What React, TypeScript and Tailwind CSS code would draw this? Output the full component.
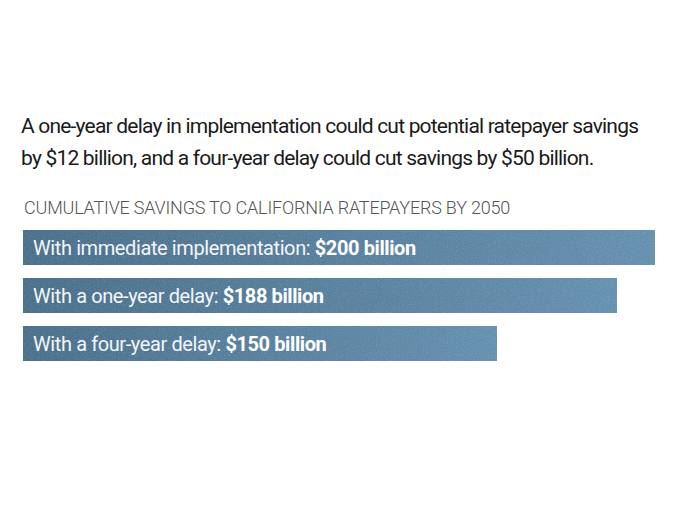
import React from "react";

const bars = [
  { label: "With immediate implementation:", value: "$200 billion", amount: 200 },
  { label: "With a one-year delay:", value: "$188 billion", amount: 188 },
  { label: "With a four-year delay:", value: "$150 billion", amount: 150 },
];

const FULL_WIDTH = 632;

/** Grainy texture laid over each bar */
function Grain({ id }: { id: string }) {
  return (
    <svg className="pointer-events-none absolute inset-0 h-full w-full opacity-30" aria-hidden>
      <filter id={id}>
        <feTurbulence type="fractalNoise" baseFrequency="0.9" numOctaves="2" stitchTiles="stitch" />
        <feColorMatrix type="saturate" values="0" />
      </filter>
      <rect width="100%" height="100%" filter={`url(#${id})`} />
    </svg>
  );
}

function Bar({ label, value, amount, index }: { label: string; value: string; amount: number; index: number }) {
  return (
    <div
      className="relative flex h-[35px] items-center overflow-hidden bg-gradient-to-r from-[#3c6686] to-[#5b8cb0] pl-[10px]"
      style={{ width: (FULL_WIDTH * amount) / 200 }}
    >
      <Grain id={`grain-${index}`} />
      <span className="relative whitespace-nowrap text-[20px] tracking-[-0.4px] text-[#f2f6f9]">
        {label} <b className="font-bold text-white">{value}</b>
      </span>
    </div>
  );
}

export default function App() {
  return (
    <div className="h-[510px] w-[680px] bg-white pl-[21px] pt-[110px] font-['Roboto',sans-serif]">
      <p className="whitespace-nowrap text-[21px] leading-[32px] tracking-[-0.8px] text-[#1a1a1a]">
        A one-year delay in implementation could cut potential ratepayer savings
        <br />
        by $12 billion, and a four-year delay could cut savings by $50 billion.
      </p>
      <div className="mt-[22px] pl-[3px] text-[18px] font-light leading-[24px] tracking-[-0.2px] text-[#555]">
        CUMULATIVE SAVINGS TO CALIFORNIA RATEPAYERS BY 2050
      </div>
      <div className="mt-[10px] flex flex-col gap-[13px] pl-[2px]">
        {bars.map((b, i) => (
          <Bar key={b.label} {...b} index={i} />
        ))}
      </div>
    </div>
  );
}
